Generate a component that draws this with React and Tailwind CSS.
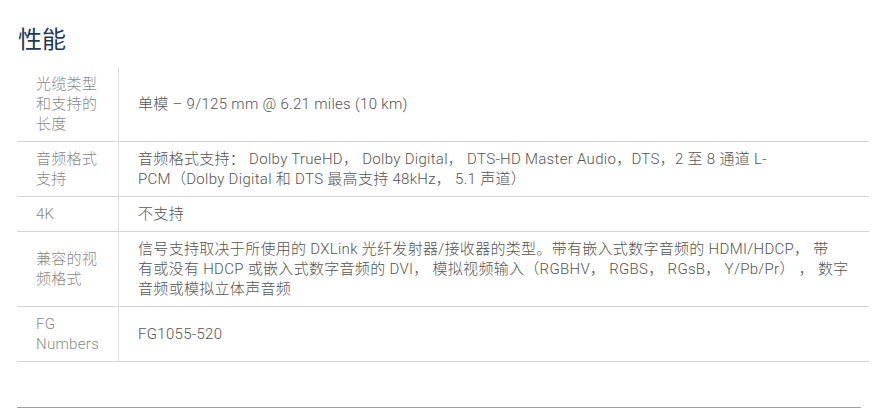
import React from "react";

const rows = [
  { label: "光缆类型和支持的长度", lines: ["单模 – 9/125 mm @ 6.21 miles (10 km)"] },
  {
    label: "音频格式支持",
    lines: [
      "音频格式支持： Dolby TrueHD， Dolby Digital， DTS-HD Master Audio，DTS，2 至 8 通道 L-",
      "PCM（Dolby Digital 和 DTS 最高支持 48kHz， 5.1 声道）",
    ],
  },
  { label: "4K", lines: ["不支持"] },
  {
    label: "兼容的视频格式",
    lines: [
      "信号支持取决于所使用的 DXLink 光纤发射器/接收器的类型。带有嵌入式数字音频的 HDMI/HDCP， 带",
      "有或没有 HDCP 或嵌入式数字音频的 DVI， 模拟视频输入（RGBHV， RGBS， RGsB， Y/Pb/Pr） ， 数字",
      "音频或模拟立体声音频",
    ],
  },
  { label: "FG Numbers", lines: ["FG1055-520"] },
];

export default function App() {
  return (
    <div
      className="w-[874px] h-[416px] bg-white pl-[17px] pr-[13px] overflow-hidden"
      style={{ fontFamily: "Roboto, 'Noto Sans CJK SC', sans-serif" }}
    >
      <h2 className="pt-[22px] text-[24px] leading-[36px] text-[#1f3a5a] font-normal pl-[1px]">性能</h2>
      <table className="mt-[9px] w-full border-collapse">
        <tbody>
          {rows.map((r, i) => (
            <tr key={i} className="border-b border-[#d6d6d6]">
              <td className="w-[102px] align-middle pl-[19px] pr-[19px] py-[7px] text-[15px] tracking-[0.3px] leading-[20px] font-light text-[#8a8a8a] border-r border-[#e2e2e2]">
                {r.label}
              </td>
              <td className="align-middle pl-[19px] pr-[20px] py-[7px] text-[15px] tracking-[0.3px] leading-[20px] font-light text-[#555555]">
                {r.lines.map((l, j) => (
                  <span key={j} className="block whitespace-nowrap">
                    {l}
                  </span>
                ))}
              </td>
            </tr>
          ))}
        </tbody>
      </table>
      <div className="mt-[45px] border-t border-[#a0a0a0]" />
    </div>
  );
}
